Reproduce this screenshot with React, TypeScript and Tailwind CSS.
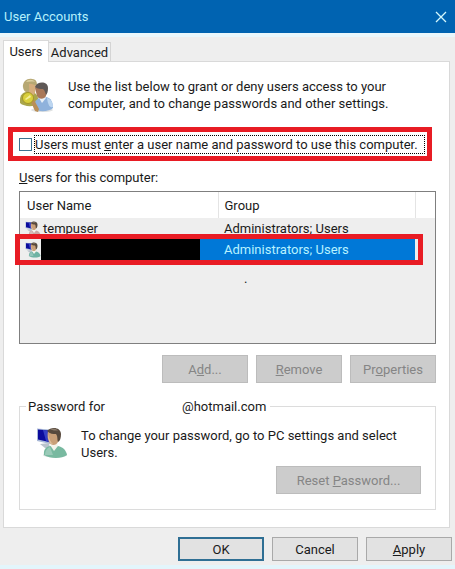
import type { ReactNode } from 'react'
import clsx from 'clsx'

type User = {
    id: string
    name: string
    group: string
    selected: boolean
    shirt: string
}

const users: User[] = [
    { id: 'temp', name: 'tempuser', group: 'Administrators; Users', selected: false, shirt: '#c9a9a6' },
    { id: 'owner', name: '', group: 'Administrators; Users', selected: true, shirt: '#6fb3a4' },
]

function UserIcon({ size, shirt }: { size: string; shirt: string }) {
    return (
        <svg className={clsx('shrink-0', size)} viewBox="0 0 32 32" aria-hidden="true">
            <ellipse cx="19" cy="28" rx="12" ry="2.5" fill="#d9dedd" />
            <path d="M1 1.5 13 2.5 14 17 1 14Z" fill="#a9b9d8" />
            <path d="M2 2.5 12.500 3.500 13 15 2 12.500Z" fill="#0b0b9c" />
            <path d="M7 3 12.500 3.500 13 15 10 14Z" fill="#3540c4" />
            <path d="M4 17 13 16 14 21 9 21Z" fill="#b9c3cc" />
            <path d="M8 28c-1-6 3-9 7-9h7c5 1 8 4 9 9-5 4-17 4-23 0Z" fill={shirt} />
            <path d="M9 28c0-4 2-7 5-8l3 8Z" fill="#fff" opacity=".25" />
            <path d="m14 18 4 6 4-5-1-3h-6Z" fill="#f4f3ec" />
            <path d="M12 5c3-4 10-3 11 2l-1 8c-2 4-7 4-9 0-1-2-2-7-1-10Z" fill="#c99f78" />
            <path d="M12 7c1 4 2 8 5 10-3 0-5-4-5-10Z" fill="#e3c4a2" />
            <path d="M11 4c4-5 14-4 14 3 0 4-1 7-3 8-1-3 0-5-2-8-3 0-6 0-9-3Z" fill="#57493d" />
            <path d="M14 2.500c3-1 6-1 8 1-3 0-5 0-8-1Z" fill="#8b7b6b" />
        </svg>
    )
}

function UsersKeyIcon() {
    return (
        <svg className="h-9 w-9 shrink-0" viewBox="0 0 36 36" aria-hidden="true">
            <ellipse cx="23" cy="32" rx="11" ry="2" fill="#e0e2e2" />
            <path d="M1 22c0-5 3-8 7-8h5c5 1 7 5 6 12-4 3-14 3-18-1Z" fill="#a9a64c" />
            <path d="M6 7c1-5 9-7 11-1l-1 9c-2 4-6 4-8 0Z" fill="#d6ad7c" />
            <path d="M4 10c-1-7 5-10 9-9 5 0 5 4 5 7-3-1-6-3-8-2 0 4 1 7-1 9-3-1-5-3-5-7Z" fill="#b7a873" />
            <path d="M7 4c2-3 7-3 9 0-4-1-6 0-9 0Z" fill="#dccf9f" />
            <path d="M15 31c-1-7 3-11 8-12h4c5 1 7 5 7 11-4 4-15 4-19 1Z" fill="#8fb2dc" />
            <path d="M28 20c4 1 6 5 6 9-4 1-5-3-6-9Z" fill="#bdd6f0" />
            <path d="m20 20 3 5 4-5-1-2h-5Z" fill="#e9f0f7" />
            <path d="M16 10c1-5 10-6 12 0l-1 8c-2 4-8 3-9 0Z" fill="#a97859" />
            <path d="M16 9c2-6 13-6 13 1 0 4-1 6-2 7-1-3-1-4-3-6-3 0-5 0-8-2Z" fill="#5f5856" />
            <path d="m11 22 3-2 6 11-1 3-3-1Z" fill="#b98f57" />
            <circle cx="9" cy="20" r="5.500" fill="#d9cf3d" stroke="#a49627" />
            <path d="m6 21 5-4 1 2-5 3Z" fill="#f5ef9a" />
        </svg>
    )
}

function DialogButton({ children, disabled, primary, width = 'w-[86px]' }: { children: ReactNode; disabled?: boolean; primary?: boolean; width?: string }) {
    return (
        <button
            type="button"
            disabled={disabled}
            className={clsx(
                'whitespace-nowrap text-center',
                width,
                disabled ? 'h-7 border border-[#bcbcbc] bg-[#cccccc] text-[#858585]' : 'h-6 bg-[#e2e2e2]',
                primary && 'border-2 border-[#2f6f94]',
                !primary && !disabled && 'border border-[#a9a9a9]',
            )}
        >
            {children}
        </button>
    )
}

export default function App() {
    return (
        <div className="flex min-h-screen flex-col border-b-4 border-[#e3f5fb] bg-[#eeeeee] font-['Roboto','Noto_Sans',sans-serif] text-[13px] leading-[17px] text-[#1a1a1a]">
            <header className="flex h-[33px] items-center justify-between bg-[#0063b1] pr-2 pl-1 text-[#b5f0fb]">
                <h1>User Accounts</h1>
                <button type="button" aria-label="Close">
                    <svg className="h-3 w-3" viewBox="0 0 12 12" stroke="#d5f8fc" strokeWidth="1.3" aria-hidden="true">
                        <path d="M1 1 11 11M11 1 1 11" />
                    </svg>
                </button>
            </header>

            <main className="flex flex-col border-t-4 border-[#e9f7fc] pr-[5px] pl-[3px]">
                {/* Tabs */}
                <div role="tablist" className="flex items-end pt-[3px]">
                    <button type="button" role="tab" aria-selected="true" className="z-10 -mb-px h-[22px] w-[46px] border border-b-0 border-[#d9d9d9] bg-white">
                        Users
                    </button>
                    <button type="button" role="tab" aria-selected="false" className="h-[19px] w-[62px] border border-b-0 border-l-0 border-[#d4d4d4] bg-[#f0f0f0]">
                        Advanced
                    </button>
                </div>

                <section role="tabpanel" className="border border-[#d9d9d9] bg-white pr-[13px] pb-[17px] pl-[15px]">
                    <div className="flex gap-[13px] pt-4">
                        <UsersKeyIcon />
                        <p className="max-w-[350px]">
                            Use the list below to grant or deny users access to your computer, and to change passwords and other settings.
                        </p>
                    </div>

                    <div className="-ml-[11px] mt-[13px] mr-1 flex h-[34px] items-center border-[5px] border-[#e81c24] pl-1.5">
                        <input
                            id="require-password"
                            type="checkbox"
                            className="h-[13px] w-[13px] shrink-0 appearance-none border border-[#3c7391] bg-white checked:bg-[#3c7391]"
                        />
                        <label htmlFor="require-password" className="mr-0.5 ml-0.5 grow border border-dotted border-black whitespace-nowrap">
                            Users must <u>e</u>nter a user name and password to use this computer.
                        </label>
                    </div>

                    <h2 id="users-label" className="mt-2">
                        <u>U</u>sers for this computer:
                    </h2>

                    {/* User list */}
                    <div className="mt-[5px] h-[153px] border border-[#7f7f7f] bg-[#eeeeee]">
                        <table aria-labelledby="users-label" className="w-full table-fixed border-collapse">
                            <thead>
                                <tr className="h-[26px] bg-white text-left">
                                    <th className="w-[198px] border-r border-[#e4e4e4] pl-[7px] font-normal">User Name</th>
                                    <th className="border-r border-[#e4e4e4] pl-1.5 font-normal">Group</th>
                                    <th className="w-5" aria-label="Spacer" />
                                </tr>
                            </thead>
                            <tbody>
                                {users.map(u => (
                                    <tr key={u.id} className="h-[21px]">
                                        <td className="relative p-0">
                                            <div className="flex items-center gap-0.5 pl-[5px]">
                                                <UserIcon size="h-4 w-4" shirt={u.shirt} />
                                                {u.name}
                                            </div>
                                            {u.selected && <div className="absolute inset-y-0 left-[21px] w-[159px] bg-black" />}
                                            {u.selected && <div className="absolute inset-y-0 right-0 left-[180px] bg-[#0078d7]" />}
                                        </td>
                                        <td className={clsx('p-0 pl-1.5', u.selected && 'bg-[#0078d7] text-[#b8f2ff]')}>{u.group}</td>
                                        <td className="relative p-0">
                                            {u.selected && <div className="absolute -inset-y-[5px] right-3 -left-[400px] border-[5px] border-[#e81c24]" />}
                                        </td>
                                    </tr>
                                ))}
                            </tbody>
                        </table>
                        <p className="mt-2.5 pl-[54%]">.</p>
                    </div>

                    <div className="mt-[11px] flex justify-end gap-2">
                        <DialogButton disabled>A<u>d</u>d...</DialogButton>
                        <DialogButton disabled><u>R</u>emove</DialogButton>
                        <DialogButton disabled>Pr<u>o</u>perties</DialogButton>
                    </div>

                    {/* Password */}
                    <fieldset className="mt-[15px] border border-[#dcdcdc] pr-[14px] pb-[15px] pl-4">
                        <legend className="-ml-2.5 flex gap-[77px] pr-1 pl-0.5">
                            <span>Password for</span>
                            <span>@hotmail.com</span>
                        </legend>
                        <div className="flex gap-[13px] pt-3">
                            <UserIcon size="h-8 w-8" shirt="#78b9a0" />
                            <p>To change your password, go to PC settings and select Users.</p>
                        </div>
                        <div className="mt-[5px] flex justify-end">
                            <DialogButton disabled width="w-[145px]">
                                Reset <u>P</u>assword...
                            </DialogButton>
                        </div>
                    </fieldset>
                </section>
            </main>

            <footer className="flex justify-end gap-2 pt-[9px] pr-[3px]">
                <DialogButton primary>OK</DialogButton>
                <DialogButton>Cancel</DialogButton>
                <DialogButton><u>A</u>pply</DialogButton>
            </footer>
        </div>
    )
}
